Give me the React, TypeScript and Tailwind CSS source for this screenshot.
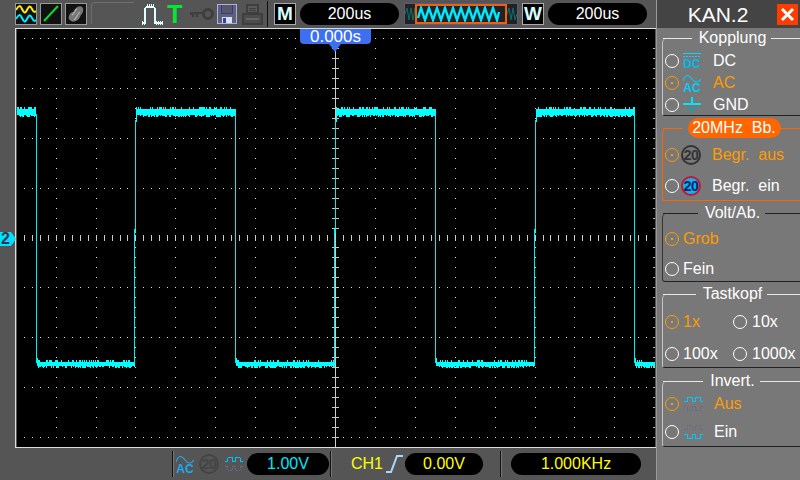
import React from "react";

const FONT = "font-['Liberation_Sans',Arial,sans-serif]";

function rng(seed: number) {
  let s = seed;
  return () => {
    s = (s * 1664525 + 1013904223) % 4294967296;
    return s / 4294967296;
  };
}

function Band({ x1, x2, y1, y2, seed }: { x1: number; x2: number; y1: number; y2: number; seed: number }) {
  const r = rng(seed);
  const out: React.ReactNode[] = [];
  for (let x = x1; x < x2; x++) {
    const top = r() < 0.3 ? y1 - 2 : y1;
    const bot = r() < 0.65 ? y2 + 1 + Math.floor(r() * 2) : y2;
    out.push(<rect key={x} x={x} y={top} width={1} height={bot - top} fill="#00ffff" />);
  }
  return <>{out}</>;
}

function Scope() {
  const dots: React.ReactNode[] = [];
  for (let i = 0; i < 9; i++) {
    const y = 38 + i * 50;
    if (i === 4) continue;
    for (let x = 23; x < 655; x += 8) dots.push(<rect key={`h${i}-${x}`} x={x} y={y} width={1} height={1} fill="#ddd" />);
  }
  for (let c = 0; c < 15; c++) {
    const x = 55 + c * 40;
    if (x === 335) continue;
    for (let y = 48; y < 438; y += 10) {
      if ((y - 38) % 50 === 0) continue;
      dots.push(<rect key={`v${c}-${y}`} x={x} y={y} width={1} height={1} fill="#ddd" />);
    }
  }
  const ticks: React.ReactNode[] = [];
  for (let x = 23; x < 655; x += 8) ticks.push(<rect key={`tx${x}`} x={x} y={235} width={1} height={7} fill="#ccc" />);
  for (let y = 38; y < 448; y += 10) ticks.push(<rect key={`ty${y}`} x={332} y={y} width={7} height={1} fill="#ccc" />);
  for (let y = 48; y < 448; y += 10) ticks.push(<rect key={`tr${y}`} x={654} y={y} width={2} height={1} fill="#bbb" />);
  const highs: [number, number][] = [[16, 35], [136, 236], [336, 436], [536, 636]];
  const lows: [number, number][] = [[37, 135], [237, 335], [437, 535], [637, 656]];
  return (
    <svg viewBox="16 29 640 419" className="block w-full h-full" shapeRendering="crispEdges">
      <rect x={16} y={29} width={640} height={419} fill="#000" />
      {dots}
      <rect x={16} y={238} width={640} height={1} fill="#ccc" />
      <rect x={335} y={29} width={1} height={419} fill="#ccc" />
      {ticks}
      {highs.map(([a, b], i) => <Band key={`a${i}`} x1={a} x2={b} y1={109} y2={115} seed={i * 77 + 5} />)}
      {lows.map(([a, b], i) => <Band key={`b${i}`} x1={a} x2={b} y1={363} y2={367} seed={i * 91 + 13} />)}
      {[35, 235, 435, 635].map((x) => <rect key={x} x={x} y={114} width={1} height={250} fill="#00eeee" />)}
      {[35, 235, 435, 635].map((x) => <rect key={`s${x}`} x={x + 1} y={359} width={1} height={8} fill="#00ffff" />)}
      {[135, 335, 535].map((x) => (
        <g key={x}>
          <rect x={x + 1} y={110} width={1} height={12} fill="#00ffff" />
          <rect x={x} y={120} width={1} height={109} fill="#00eeee" />
          <rect x={x - 1} y={229} width={1} height={136} fill="#00eeee" />
          <rect x={x} y={229} width={1} height={4} fill="#00ffff" />
        </g>
      ))}
    </svg>
  );
}

function IconBox({ children, w = 22 }: { children: React.ReactNode; w?: number }) {
  return (
    <div className="bg-[#111] border border-[#999] h-[22px] shrink-0" style={{ width: w }}>
      {children}
    </div>
  );
}

function Pill({ children, cls, w }: { children: React.ReactNode; cls: string; w: string }) {
  return (
    <div className={`bg-black rounded-[11px] h-[22px] flex items-center justify-center text-[16px] leading-none shrink-0 ${cls} ${w}`}>
      {children}
    </div>
  );
}

function Sep() {
  return <div className="w-px h-[26px] bg-[#111] border-r border-[#777] box-content shrink-0" />;
}

function Radio({ on }: { on?: boolean }) {
  return (
    <span className={`relative w-[14px] h-[14px] rounded-full border flex items-center justify-center shrink-0 ${on ? "border-[#ff9c00]" : "border-white"}`}>
      {on && <span className="w-[2px] h-[2px] bg-[#ff9c00]" />}
    </span>
  );
}

function Group({ title, children, orange, dark, h }: { title: React.ReactNode; children: React.ReactNode; orange?: boolean; dark?: boolean; h: string }) {
  const line = orange ? "bg-[#ff6600]" : dark ? "bg-[#222]" : "bg-[#e8e8e8]";
  return (
    <div className={`relative ml-[5px] rounded-tl-[5px] rounded-bl-[3px] border-l border-b ${h} ${orange ? "border-[#ff6600]" : `${dark ? "border-l-[#333]" : "border-l-[#c4c4c4]"} border-b-[#222]`}`}>
      <div className="absolute left-0 right-0 top-0 flex items-center -translate-y-1/2">
        <div className={`h-px flex-1 ${line}`} />
        {title}
        <div className={`h-px flex-1 ${line}`} />
      </div>
      {children}
    </div>
  );
}

function Legend({ children }: { children: React.ReactNode }) {
  return <span className="ml-[2px] px-[5px] text-white text-[16px] leading-[18px]">{children}</span>;
}

function Row({ on, icon, label, h, gap = "gap-[4px]", ml = "ml-[8px]" }: { on?: boolean; icon?: React.ReactNode; label: string; h: string; gap?: string; ml?: string }) {
  return (
    <div className={`flex items-center pl-[2px] ${h} ${gap}`}>
      <Radio on={on} />
      {icon}
      <span className={`${on ? "text-[#ff9c00]" : "text-white"} text-[16px] leading-none whitespace-pre ${icon ? ml : ""}`}>{label}</span>
    </div>
  );
}

const Dc = () => (
  <svg width="18" height="18" viewBox="0 0 18 18" className="shrink-0" shapeRendering="crispEdges">
    <rect x="0" y="1" width="18" height="1" fill="#00d8ff" />
    <path d="M0 4h18" stroke="#00d8ff" strokeDasharray="2 1" />
    <text x="9" y="16" textAnchor="middle" fontSize="12" fontFamily="Liberation Sans" fontWeight="700" fill="#00b8f0">DC</text>
  </svg>
);
const Ac = ({ c = "#00ccff" }: { c?: string }) => (
  <svg width="18" height="19" viewBox="0 0 18 19" className="shrink-0">
    <path d="M0 7C3 -1 6 1 9 5s6 4 9 0" fill="none" stroke={c} strokeWidth="1.2" />
    <text x="9" y="18" textAnchor="middle" fontSize="12" fontFamily="Liberation Sans" fontWeight="700" fill={c}>AC</text>
  </svg>
);
const Gnd = () => (
  <svg width="18" height="18" viewBox="0 0 18 18" className="shrink-0" shapeRendering="crispEdges">
    <rect x="0" y="7" width="18" height="2" fill="#00e4ff" />
    <rect x="8" y="1" width="2" height="6" fill="#00e4ff" />
    <rect x="4" y="12" width="10" height="1" fill="#00a8b8" />
    <rect x="7" y="15" width="4" height="1" fill="#00a8b8" />
  </svg>
);
const Limit = ({ on }: { on?: boolean }) => (
  <span
    className={`w-[20px] h-[20px] rounded-full border-2 flex items-center justify-center text-[14px] font-bold leading-none tracking-[-0.5px] shrink-0 ${
      on ? "border-[#d01030] bg-[#00b8f8] text-[#101860]" : "border-[#333] text-[#333]"
    }`}
  >
    20
  </span>
);
const Pulse = ({ inv, w = 19 }: { inv?: boolean; w?: number }) => {
  const blue = "#00c8ff";
  const gray = "#6a6a88";
  return (
    <svg width={w} height="20" viewBox="0 0 19 20" className="shrink-0" shapeRendering="crispEdges">
      <path d="M0 7.5h3v-4h5v4h3v-4h5v4h3" fill="none" stroke={inv ? gray : blue} strokeWidth="1" strokeDasharray={inv ? "2 1" : undefined} />
      <path d="M0 12.5h3v4h5v-4h3v4h5v-4h3" fill="none" stroke={inv ? blue : gray} strokeWidth="1" strokeDasharray={inv ? undefined : "2 1"} />
    </svg>
  );
};

function TopBar() {
  return (
    <div className="h-[28px] shrink-0 flex items-center pl-[15px] bg-[#555]">
      <div className="flex gap-[3px]">
        <IconBox>
          <svg viewBox="0 0 20 20" className="w-full h-full">
            <path d="M0 6c3-5 4-5 6-1s3 5 5 1 3-5 5-1 3 3 4 2" fill="none" stroke="#ffee00" strokeWidth="2" />
            <path d="M0 15c3-5 4-5 6-1s3 5 5 1 3-5 5-1 3 3 4 2" fill="none" stroke="#00eeff" strokeWidth="2" />
          </svg>
        </IconBox>
        <IconBox>
          <svg viewBox="0 0 20 20" className="w-full h-full">
            <path d="M3 17 17 2" stroke="#10d830" strokeWidth="2" />
          </svg>
        </IconBox>
        <IconBox>
          <svg viewBox="0 0 20 20" className="w-full h-full">
            <path d="M3 12c2-6 5-2 6-6s6-5 8-2c1 5-2 6-3 9s-6 6-9 4c-2-1-3-3-2-5z" fill="#777" />
            <path d="M6 11c3-1 2-6 5-6M8 16c3-2 3-6 6-8" stroke="#aaa" strokeWidth="1.5" fill="none" />
          </svg>
        </IconBox>
      </div>
      <div className="w-[43px] h-[22px] ml-[4px] -mt-[3px] border-l border-t border-[#6e6e6e] rounded-tl-[4px] shrink-0" />
      <svg width="22" height="22" viewBox="0 0 22 22" className="ml-[7px] shrink-0" shapeRendering="crispEdges">
        <path d="M1 20h3V6q0-2 2-2h6q2 0 2 2v14h7" fill="none" stroke="#dff" strokeWidth="1.2" />
        <path d="M6 3.5V1M8 3.5V1M10 3.5V1M12 3.5V1M1 22v-4M3 22v-4M15 22v-4M17 22v-4M19 22v-4M21 22v-4" stroke="#dff" />
      </svg>
      <span className="ml-[4px] text-[#00e832] text-[25px] font-bold leading-none w-[16px] text-center shrink-0">T</span>
      <svg width="24" height="14" viewBox="0 0 24 14" className="ml-[7px] shrink-0">
        <circle cx="18" cy="7" r="4.5" fill="none" stroke="#3e3e3e" strokeWidth="3" />
        <path d="M14 6H1v2M3 6v4M7 6v4" stroke="#3e3e3e" strokeWidth="2.2" fill="none" />
      </svg>
      <svg width="20" height="20" viewBox="0 0 20 20" className="ml-[3px] shrink-0" shapeRendering="crispEdges">
        <path d="M.5.5h19v19H.5z" fill="#5c6078" stroke="#a8b0e8" />
        <rect x="4" y="1" width="12" height="8" fill="#585868" />
        <path d="M4.5 1v8h11V1" fill="none" stroke="#383890" />
        <rect x="5" y="13" width="10" height="6" fill="#d8e0f8" />
        <rect x="6" y="14" width="3" height="5" fill="#3840a0" />
      </svg>
      <svg width="21" height="21" viewBox="0 0 21 21" className="ml-[5px] shrink-0" shapeRendering="crispEdges">
        <path d="M5 1h11v8H5z" fill="#5a5a5a" stroke="#3e3e3e" strokeWidth="1.5" />
        <path d="M7 4h7M7 6h7" stroke="#3e3e3e" />
        <path d="M1 10h19v10H1z" fill="#4c4c4c" stroke="#3e3e3e" strokeWidth="1.5" />
        <path d="M4 15h13" stroke="#666" strokeWidth="2" />
      </svg>
      <div className="ml-[4px] w-px h-[26px] bg-[#111] shrink-0" />
      <div className="ml-[6px] w-[22px] h-[22px] bg-black border border-[#aaa] text-[#d8ffff] text-[19px] font-bold flex items-center justify-center shrink-0">M</div>
      <Pill cls="text-white ml-[4px]" w="w-[99px]">200us</Pill>
      <div className="ml-[5px] w-[114px] h-[22px] bg-[#222] border border-[#5a5a80] flex justify-center shrink-0">
        <svg viewBox="0 0 112 20" className="w-full h-full">
          <path d="M0 10l2-6 2 12 2-12 2 12 2-12 1 6" fill="none" stroke="#0a7070" />
          <path d="M102 10l2-6 2 12 2-12 2 12 2-6" fill="none" stroke="#0a7070" />
          <path d="M13 14l3-10 4 12 4-12 4 12 4-12 4 12 4-12 4 12 4-12 4 12 4-12 4 12 4-12 4 12 4-12 4 12 4-12 4 12 4-12 4 12 2-8" fill="none" stroke="#00e8ff" strokeWidth="2.4" />
          <rect x="11" y="1" width="90" height="18" fill="none" stroke="#f06010" strokeWidth="2" />
        </svg>
      </div>
      <div className="ml-[4px] w-[22px] h-[22px] bg-black border border-[#aaa] text-[#d8ffff] text-[19px] font-bold flex items-center justify-center shrink-0">W</div>
      <Pill cls="text-white ml-[4px]" w="w-[99px]">200us</Pill>
    </div>
  );
}

function BottomBar() {
  return (
    <div className="h-[32px] shrink-0 flex items-center pl-[172px]">
      <Sep />
      <span className="ml-[2px]"><Ac c="#20a8f0" /></span>
      <span className="ml-[5px] w-[20px] h-[20px] rounded-full border-2 border-[#444] text-[#444] text-[14px] font-bold tracking-[-0.5px] flex items-center justify-center leading-none shrink-0">20</span>
      <span className="ml-[6px]"><Pulse w={18} /></span>
      <Pill cls="text-[#00e8ff] ml-[4px]" w="w-[82px]">1.00V</Pill>
      <span className="ml-[1px]"><Sep /></span>
      <span className="ml-[19px] text-[#ffff00] text-[16px] leading-none">CH1</span>
      <svg width="18" height="20" viewBox="0 0 18 20" className="ml-[3px] shrink-0">
        <path d="M0 18h5L11 2h6" fill="none" stroke="#a8d8ff" strokeWidth="2" />
      </svg>
      <Pill cls="text-[#ffff00] ml-[1px]" w="w-[78px]">0.00V</Pill>
      <span className="ml-[17px]"><Sep /></span>
      <Pill cls="text-[#ffff00] ml-[9px]" w="w-[130px]">1.000KHz</Pill>
    </div>
  );
}

function Sidebar() {
  return (
    <div className="w-[144px] shrink-0 bg-[#787878] flex flex-col border-l border-[#999]">
      <div className="h-[28px] bg-[#444] flex items-center shrink-0">
        <span className="w-[120px] pl-[2px] text-center text-white text-[21px] leading-none">KAN.2</span>
        <span className="w-[21px] h-[21px] bg-[#ff3c00] flex items-center justify-center">
          <svg width="15" height="15" viewBox="0 0 15 15"><path d="M2 2l11 11M13 2 2 13" stroke="#fff" strokeWidth="3" /></svg>
        </span>
      </div>
      <div className="mt-[10px]">
        <Group title={<Legend>Kopplung</Legend>} h="h-[78px]">
          <div className="pt-[12px]">
            <Row icon={<Dc />} label="DC" h="h-[22px]" />
            <Row on icon={<Ac />} label="AC" h="h-[22px]" />
            <Row icon={<Gnd />} label="GND" h="h-[22px]" />
          </div>
        </Group>
      </div>
      <div className="mt-[12px]">
        <Group
          orange
          h="h-[73px]"
          title={<span className="ml-[5px] bg-[#ff6600] text-white text-[16px] leading-[20px] rounded-[10px] w-[93px] text-center shrink-0 whitespace-pre">20MHz  Bb.</span>}
        >
          <div className="pt-[11px]">
            <Row on icon={<Limit />} label="Begr.  aus" h="h-[31px]" gap="gap-[2px]" ml="ml-[9px]" />
            <Row icon={<Limit on />} label="Begr.  ein" h="h-[31px]" gap="gap-[2px]" ml="ml-[9px]" />
          </div>
        </Group>
      </div>
      <div className="mt-[12px]">
        <Group dark title={<Legend>Volt/Ab.</Legend>} h="h-[69px]">
          <div className="pt-[11px]">
            <Row on label="Grob" h="h-[30px]" />
            <Row label="Fein" h="h-[30px]" />
          </div>
        </Group>
      </div>
      <div className="mt-[12px]">
        <Group title={<Legend>Tastkopf</Legend>} h="h-[74px]">
          <div className="pt-[12px] grid grid-cols-[68px_1fr] grid-rows-[32px_32px]">
            <Row on label="1x" h="h-[32px]" />
            <Row label="10x" h="h-[32px]" gap="gap-[5px]" />
            <Row label="100x" h="h-[32px]" />
            <Row label="1000x" h="h-[32px]" gap="gap-[5px]" />
          </div>
        </Group>
      </div>
      <div className="mt-[13px]">
        <Group title={<Legend>Invert.</Legend>} h="h-[66px]">
          <div className="pt-[9px]">
            <Row on icon={<Pulse />} label="Aus" h="h-[28px]" gap="gap-[5px]" ml="ml-[6px]" />
            <Row icon={<Pulse inv />} label="Ein" h="h-[28px]" gap="gap-[5px]" ml="ml-[6px]" />
          </div>
        </Group>
      </div>
    </div>
  );
}

export default function App() {
  return (
    <div className={`w-[800px] h-[480px] flex overflow-hidden bg-[#555] ${FONT}`}>
      <div className="w-[656px] shrink-0 flex flex-col">
        <TopBar />
        <div className="relative flex-1 min-h-0 ml-[15px] border-l border-t border-b border-[#ddd]">
          <Scope />
          <div className="absolute left-[284px] top-0 w-[71px] h-[15px] bg-[#3c70f0] rounded-b-[4px] text-white text-[17px] leading-[15px] text-center">0.000s</div>
          <div className="absolute left-[313px] top-[15px] w-0 h-0 border-l-[6px] border-r-[6px] border-t-[8px] border-l-transparent border-r-transparent border-t-[#3c70f0]" />
          <div className="absolute left-[-16px] top-[203px] w-[11px] h-[14px] bg-[#00e0ff] text-[#335] text-[16px] font-bold leading-[14px] text-center">2</div>
          <div className="absolute left-[-5px] top-[203px] w-0 h-0 border-y-[7px] border-l-[5px] border-y-transparent border-l-[#00e0ff]" />
        </div>
        <BottomBar />
      </div>
      <Sidebar />
    </div>
  );
}
